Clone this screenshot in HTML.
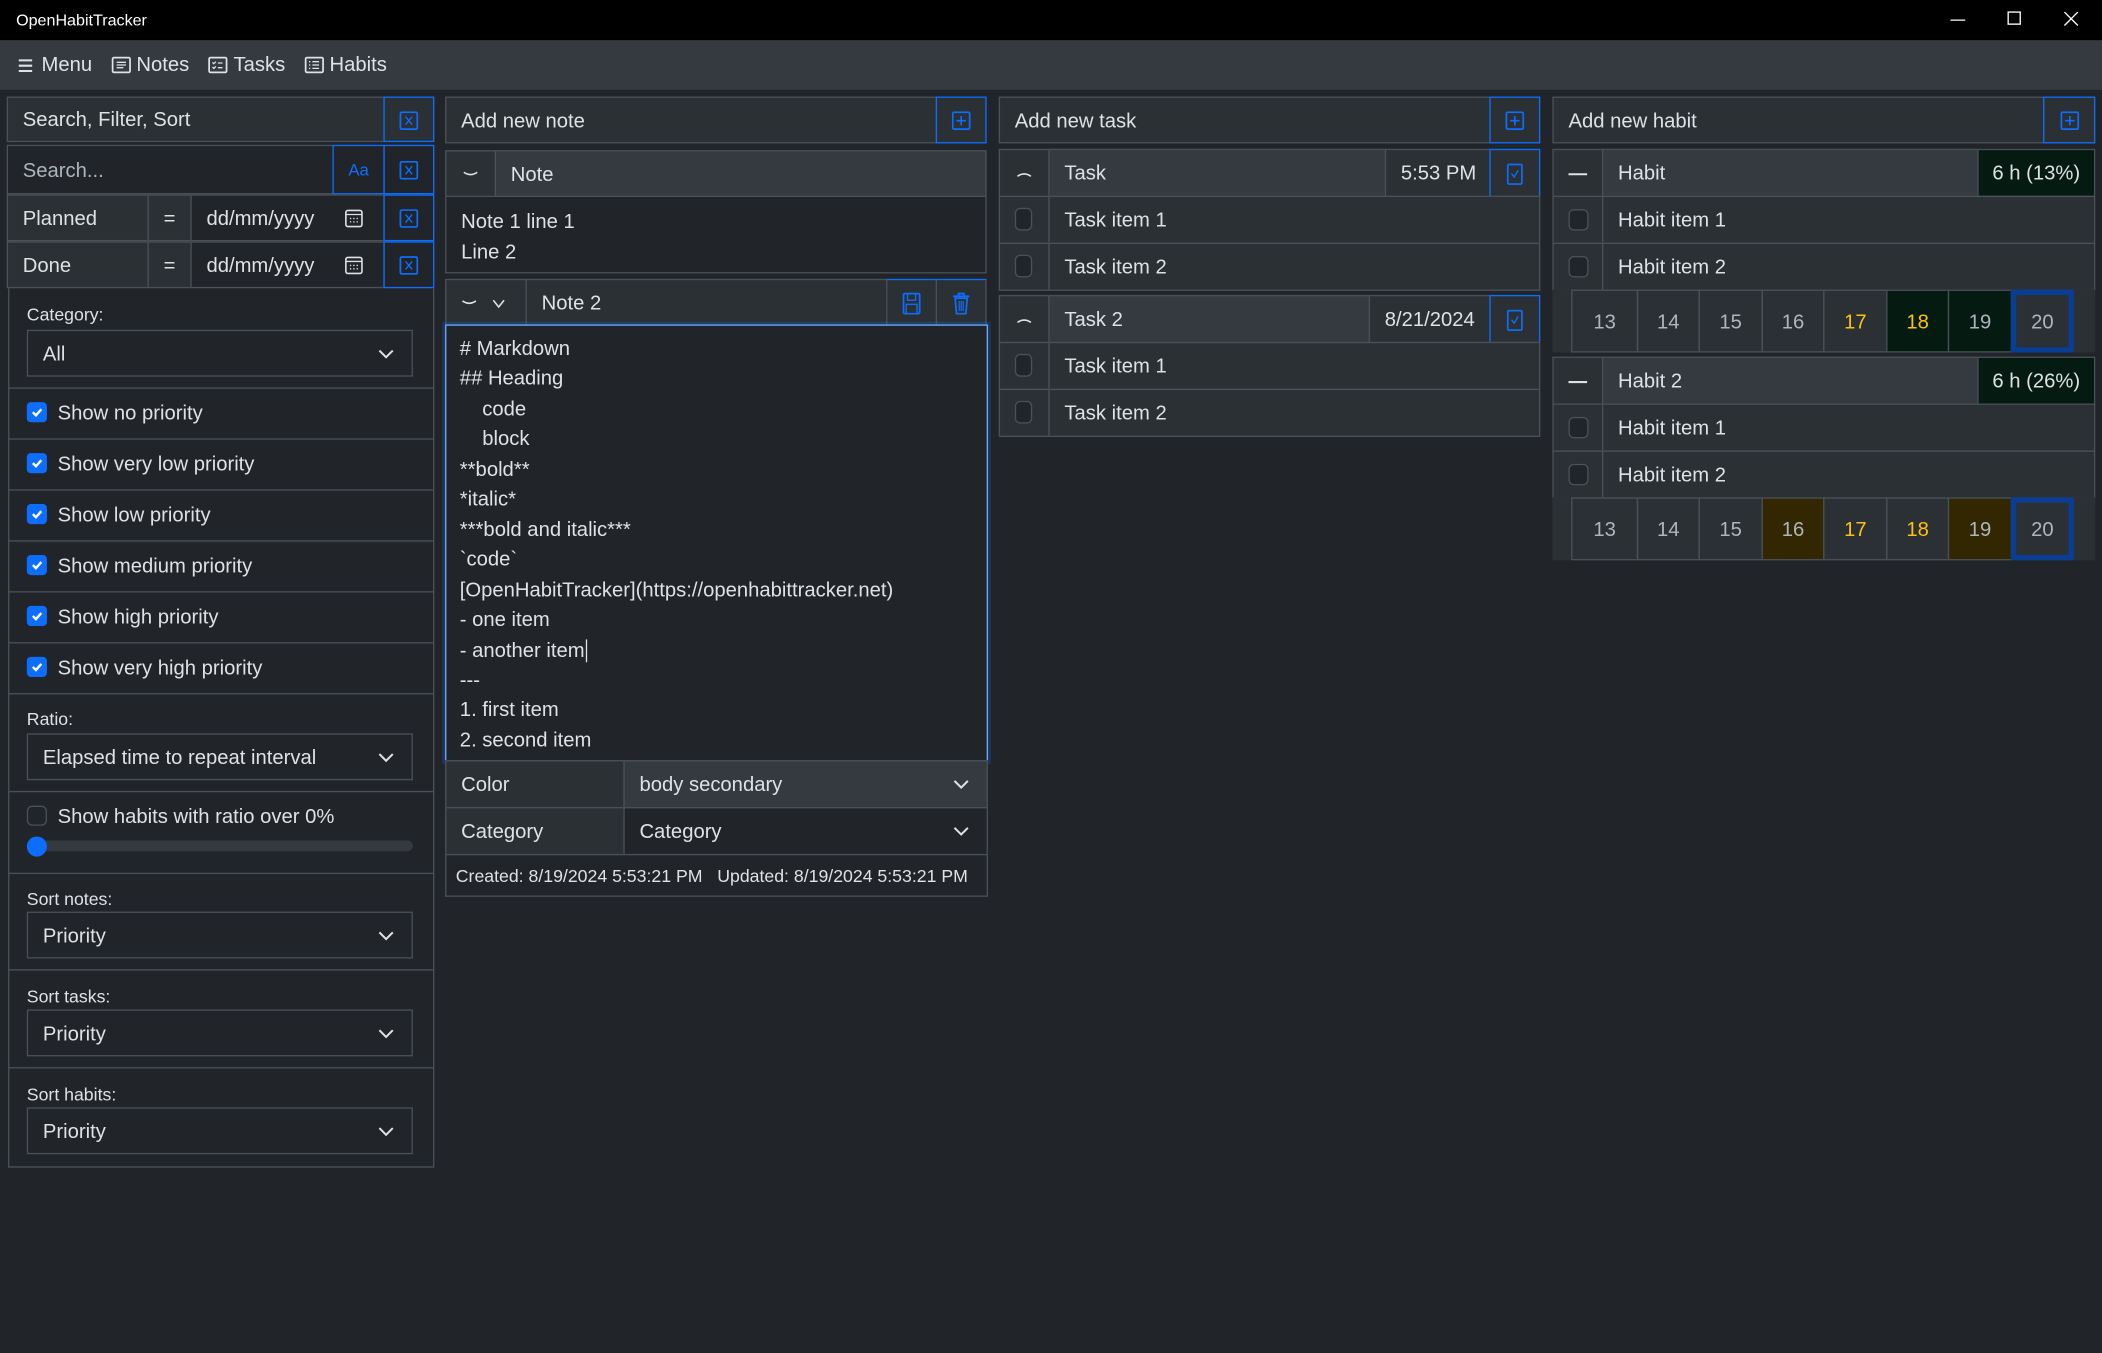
<!DOCTYPE html>
<html><head><meta charset="utf-8"><style>
html,body{margin:0;padding:0;background:#212529;width:2102px;height:1352px;overflow:hidden}
#w{position:absolute;left:0;top:0;width:1568px;height:1009px;transform:scale(1.34056);transform-origin:0 0;font-family:"Liberation Sans",sans-serif;color:#dee2e6;font-size:15.1px;background:#212529}
.a{position:absolute;box-sizing:border-box}
.c{position:absolute;box-sizing:border-box;border:1px solid #495057;display:flex;align-items:center;padding-left:11px;white-space:nowrap;padding-top:1px}
.p{background:#2b3035}.h{background:#343a40}.d{background:#212529}
.bl{border-color:#0d6efd}
.ic{justify-content:center;padding-left:0}
.lbl{position:absolute;font-size:13.2px}
.cb{position:absolute;width:15px;height:15px;border-radius:3px;background:#0d6efd}
.cb svg{position:absolute;left:2px;top:2px}
.ecb{position:absolute;width:15px;height:15px;border-radius:4px;border:1px solid #495057;background:#212529;box-sizing:border-box}
.sel svg{position:absolute;right:13px;top:50%;margin-top:-4px}
.day{position:absolute;box-sizing:border-box;border:1px solid #495057;display:flex;align-items:center;justify-content:center;color:#adb5bd;font-size:15.1px;padding-top:1px}
</style></head><body><div id="w">
<div class="a" style="left:0;top:0;width:1568px;height:30px;background:#000"></div>
<div class="a" style="left:12px;top:8px;font-size:12px;color:#fff">OpenHabitTracker</div>
<svg class="a" style="left:1455px;top:10px" width="12" height="10"><line x1="0" y1="5" x2="11" y2="5" stroke="#fff"/></svg>
<svg class="a" style="left:1497px;top:8px" width="12" height="12"><rect x="1" y="1" width="9" height="9" fill="none" stroke="#fff"/></svg>
<svg class="a" style="left:1539px;top:8px" width="12" height="12"><path d="M1 1L11 11M11 1L1 11" stroke="#fff"/></svg>
<div class="a" style="left:0;top:30px;width:1568px;height:37px;background:#343a40"></div>
<div class="a" style="left:13px;top:40px;display:flex;align-items:center;gap:0;font-size:15.1px;color:#dee2e6">
<svg width="12" height="12" style="margin-right:6px"><path d="M1 2H11M1 6H11M1 10H11" stroke="#dee2e6" stroke-width="1.5"/></svg>Menu
<svg width="15" height="13" style="margin:0 4px 0 14px"><rect x="1" y="1" width="13" height="11" rx="1" fill="none" stroke="#dee2e6" stroke-width="1.3"/><path d="M4 4.5H11M4 6.5H11M4 8.5H9" stroke="#dee2e6"/></svg>Notes
<svg width="15" height="13" style="margin:0 4px 0 14px"><rect x="1" y="1" width="13" height="11" rx="1" fill="none" stroke="#dee2e6" stroke-width="1.3"/><path d="M3.5 4.5l1 1 1.5-1.5M3.5 8l1 1 1.5-1.5M7.5 5H11M7.5 8.5H11" stroke="#dee2e6"/></svg>Tasks
<svg width="15" height="13" style="margin:0 4px 0 14px"><rect x="1" y="1" width="13" height="11" rx="1" fill="none" stroke="#dee2e6" stroke-width="1.3"/><path d="M3.5 4H4.5M3.5 6.5H4.5M3.5 9H4.5M6 4H11M6 6.5H11M6 9H11" stroke="#dee2e6"/></svg>Habits
</div>

<div class="c p" style="left:5px;top:72px;width:282px;height:34px">Search, Filter, Sort</div>
<div class="c p bl ic" style="left:286px;top:72px;width:38px;height:34px"><svg width="14" height="14"><rect x="0.7" y="0.7" width="12.6" height="12.6" rx="1" fill="none" stroke="#0d6efd" stroke-width="1.3"/><path d="M4.5 4L9.5 10M9.5 4L4.5 10" stroke="#0d6efd"/></svg></div>
<div class="c d" style="left:5px;top:108px;width:244px;height:37px;color:#adb5bd">Search...</div>
<div class="c d bl ic" style="left:248px;top:108px;width:39px;height:37px;color:#0d6efd;font-size:12.5px">Aa</div>
<div class="c d bl ic" style="left:286px;top:108px;width:38px;height:37px"><svg width="14" height="14"><rect x="0.7" y="0.7" width="12.6" height="12.6" rx="1" fill="none" stroke="#0d6efd" stroke-width="1.3"/><path d="M4.5 4L9.5 10M9.5 4L4.5 10" stroke="#0d6efd"/></svg></div>
<div class="c p" style="left:5px;top:145px;width:106px;height:35px">Planned</div>
<div class="c p ic" style="left:110px;top:145px;width:33px;height:35px">=</div>
<div class="c d" style="left:142px;top:145px;width:145px;height:35px">dd/mm/yyyy</div>
<svg class="a" style="left:257px;top:155px" width="14" height="15"><rect x="1" y="2" width="12" height="12" rx="1.5" fill="none" stroke="#dee2e6" stroke-width="1.2"/><path d="M1 5H13" stroke="#dee2e6"/><path d="M4 8h1M6.5 8h1M9 8h1M4 10.5h1M6.5 10.5h1M9 10.5h1" stroke="#dee2e6"/></svg>
<div class="c d bl ic" style="left:286px;top:145px;width:38px;height:35px"><svg width="14" height="14"><rect x="0.7" y="0.7" width="12.6" height="12.6" rx="1" fill="none" stroke="#0d6efd" stroke-width="1.3"/><path d="M4.5 4L9.5 10M9.5 4L4.5 10" stroke="#0d6efd"/></svg></div>
<div class="c p" style="left:5px;top:180px;width:106px;height:35px">Done</div>
<div class="c p ic" style="left:110px;top:180px;width:33px;height:35px">=</div>
<div class="c d" style="left:142px;top:180px;width:145px;height:35px">dd/mm/yyyy</div>
<svg class="a" style="left:257px;top:190px" width="14" height="15"><rect x="1" y="2" width="12" height="12" rx="1.5" fill="none" stroke="#dee2e6" stroke-width="1.2"/><path d="M1 5H13" stroke="#dee2e6"/><path d="M4 8h1M6.5 8h1M9 8h1M4 10.5h1M6.5 10.5h1M9 10.5h1" stroke="#dee2e6"/></svg>
<div class="c d bl ic" style="left:286px;top:180px;width:38px;height:35px"><svg width="14" height="14"><rect x="0.7" y="0.7" width="12.6" height="12.6" rx="1" fill="none" stroke="#0d6efd" stroke-width="1.3"/><path d="M4.5 4L9.5 10M9.5 4L4.5 10" stroke="#0d6efd"/></svg></div>
<div class="a" style="left:6px;top:215px;width:318px;height:656px;border:1px solid #495057;border-top:none"></div>
<div class="lbl" style="left:20px;top:227px">Category:</div>
<div class="c d sel" style="left:20px;top:246px;width:288px;height:35px">All<svg width="12" height="8"><path d="M1 1.5L6 6.5L11 1.5" fill="none" stroke="#dee2e6" stroke-width="1.5"/></svg></div>
<div class="a" style="left:6px;top:289px;width:318px;height:1px;background:#495057"></div>
<div class="lbl" style="left:20px;top:529px">Ratio:</div>
<div class="c d sel" style="left:20px;top:547px;width:288px;height:35px">Elapsed time to repeat interval<svg width="12" height="8"><path d="M1 1.5L6 6.5L11 1.5" fill="none" stroke="#dee2e6" stroke-width="1.5"/></svg></div>
<div class="a" style="left:6px;top:590px;width:318px;height:1px;background:#495057"></div>
<div class="ecb" style="left:20px;top:601px"></div>
<div class="a" style="left:43px;top:601px">Show habits with ratio over 0%</div>
<div class="a" style="left:20px;top:627px;width:288px;height:8px;border-radius:4px;background:#343a40"></div>
<div class="a" style="left:20px;top:624px;width:15px;height:15px;border-radius:50%;background:#0d6efd"></div>
<div class="a" style="left:6px;top:651px;width:318px;height:1px;background:#495057"></div>
<div class="lbl" style="left:20px;top:663px">Sort notes:</div>
<div class="c d sel" style="left:20px;top:680px;width:288px;height:35px">Priority<svg width="12" height="8"><path d="M1 1.5L6 6.5L11 1.5" fill="none" stroke="#dee2e6" stroke-width="1.5"/></svg></div>
<div class="a" style="left:6px;top:723px;width:318px;height:1px;background:#495057"></div>
<div class="lbl" style="left:20px;top:736px">Sort tasks:</div>
<div class="c d sel" style="left:20px;top:753px;width:288px;height:35px">Priority<svg width="12" height="8"><path d="M1 1.5L6 6.5L11 1.5" fill="none" stroke="#dee2e6" stroke-width="1.5"/></svg></div>
<div class="a" style="left:6px;top:796px;width:318px;height:1px;background:#495057"></div>
<div class="lbl" style="left:20px;top:809px">Sort habits:</div>
<div class="c d sel" style="left:20px;top:826px;width:288px;height:35px">Priority<svg width="12" height="8"><path d="M1 1.5L6 6.5L11 1.5" fill="none" stroke="#dee2e6" stroke-width="1.5"/></svg></div>

<div class="cb" style="left:20px;top:300px"><svg width="11" height="11"><path d="M2.5 5.5L4.8 7.8L8.8 3.3" fill="none" stroke="#fff" stroke-width="1.8"/></svg></div><div class="a" style="left:43px;top:300px">Show no priority</div>
<div class="a" style="left:6px;top:327px;width:318px;height:1px;background:#495057"></div>
<div class="cb" style="left:20px;top:338px"><svg width="11" height="11"><path d="M2.5 5.5L4.8 7.8L8.8 3.3" fill="none" stroke="#fff" stroke-width="1.8"/></svg></div><div class="a" style="left:43px;top:338px">Show very low priority</div>
<div class="a" style="left:6px;top:365px;width:318px;height:1px;background:#495057"></div>
<div class="cb" style="left:20px;top:376px"><svg width="11" height="11"><path d="M2.5 5.5L4.8 7.8L8.8 3.3" fill="none" stroke="#fff" stroke-width="1.8"/></svg></div><div class="a" style="left:43px;top:376px">Show low priority</div>
<div class="a" style="left:6px;top:403px;width:318px;height:1px;background:#495057"></div>
<div class="cb" style="left:20px;top:414px"><svg width="11" height="11"><path d="M2.5 5.5L4.8 7.8L8.8 3.3" fill="none" stroke="#fff" stroke-width="1.8"/></svg></div><div class="a" style="left:43px;top:414px">Show medium priority</div>
<div class="a" style="left:6px;top:441px;width:318px;height:1px;background:#495057"></div>
<div class="cb" style="left:20px;top:452px"><svg width="11" height="11"><path d="M2.5 5.5L4.8 7.8L8.8 3.3" fill="none" stroke="#fff" stroke-width="1.8"/></svg></div><div class="a" style="left:43px;top:452px">Show high priority</div>
<div class="a" style="left:6px;top:479px;width:318px;height:1px;background:#495057"></div>
<div class="cb" style="left:20px;top:490px"><svg width="11" height="11"><path d="M2.5 5.5L4.8 7.8L8.8 3.3" fill="none" stroke="#fff" stroke-width="1.8"/></svg></div><div class="a" style="left:43px;top:490px">Show very high priority</div>
<div class="a" style="left:6px;top:517px;width:318px;height:1px;background:#495057"></div>

<div class="c p" style="left:332px;top:72px;width:367px;height:35px">Add new note</div>
<div class="c p bl ic" style="left:698px;top:72px;width:38px;height:35px"><svg width="14" height="14"><rect x="0.7" y="0.7" width="12.6" height="12.6" rx="1" fill="none" stroke="#0d6efd" stroke-width="1.3"/><path d="M7 3.5V10.5M3.5 7H10.5" stroke="#0d6efd" stroke-width="1.2"/></svg></div>
<div class="c p ic" style="left:332px;top:112px;width:38px;height:35px"><svg width="12" height="6"><path d="M1 1.5Q6 5 11 1.5" fill="none" stroke="#dee2e6" stroke-width="1.2"/></svg></div>
<div class="c h" style="left:369px;top:112px;width:367px;height:35px">Note</div>
<div class="a d" style="left:332px;top:147px;width:404px;height:57px;border:1px solid #495057;border-top:none;padding:8px 0 0 11px;line-height:22.5px">Note 1 line 1<br>Line 2</div>
<div class="c p" style="left:332px;top:208px;width:61px;height:35px;gap:11px"><svg width="12" height="6"><path d="M1 1.5Q6 5 11 1.5" fill="none" stroke="#dee2e6" stroke-width="1.2"/></svg><svg width="10" height="7"><path d="M1 1L5 6L9 1" fill="none" stroke="#dee2e6" stroke-width="1.2"/></svg></div>
<div class="c p" style="left:392px;top:208px;width:270px;height:35px">Note 2</div>
<div class="c p ic" style="left:661px;top:208px;width:38px;height:35px;border-top-color:#0d6efd"><svg width="14" height="17"><rect x="1" y="1" width="12" height="15" rx="1" fill="none" stroke="#0d6efd" stroke-width="1.3"/><rect x="4" y="1" width="6" height="5" fill="none" stroke="#0d6efd"/><rect x="3" y="9" width="8" height="7" fill="none" stroke="#0d6efd"/></svg></div>
<div class="c p ic" style="left:698px;top:208px;width:38px;height:35px;border-top-color:#0d6efd"><svg width="14" height="17"><path d="M1 3H13M5 3V1H9V3" fill="none" stroke="#0d6efd" stroke-width="1.4"/><path d="M2.5 4.5L3.5 16H10.5L11.5 4.5Z" fill="none" stroke="#0d6efd" stroke-width="1.3"/><path d="M5.5 6.5V14M7 6.5V14M8.5 6.5V14" stroke="#0d6efd" stroke-width="0.9"/></svg></div>
<div class="a d" style="left:332px;top:242px;width:405px;height:326px;border:1px solid #6ea8fe;box-shadow:0 0 0 2px rgba(13,110,253,0.25);padding:7px 0 0 10px;line-height:22.45px;white-space:pre"># Markdown
## Heading
    code
    block
**bold**
*italic*
***bold and italic***
`code`
[OpenHabitTracker](https://openhabittracker.net)
- one item
- another item<span style="border-left:1px solid #dee2e6;margin-left:1px"></span>
---
1. first item
2. second item</div>
<div class="c p" style="left:332px;top:567px;width:134px;height:36px">Color</div>
<div class="c h sel" style="left:465px;top:567px;width:272px;height:36px">body secondary<svg width="12" height="8"><path d="M1 1.5L6 6.5L11 1.5" fill="none" stroke="#dee2e6" stroke-width="1.5"/></svg></div>
<div class="c p" style="left:332px;top:602px;width:134px;height:36px">Category</div>
<div class="c d sel" style="left:465px;top:602px;width:272px;height:36px">Category<svg width="12" height="8"><path d="M1 1.5L6 6.5L11 1.5" fill="none" stroke="#dee2e6" stroke-width="1.5"/></svg></div>
<div class="c d" style="left:332px;top:637px;width:405px;height:32px;font-size:13.2px;padding-left:7px">Created: 8/19/2024 5:53:21 PM&nbsp;&nbsp;&nbsp;Updated: 8/19/2024 5:53:21 PM</div>

<div class="c p" style="left:745px;top:72px;width:367px;height:35px">Add new task</div>
<div class="c p bl ic" style="left:1111px;top:72px;width:38px;height:35px"><svg width="14" height="14"><rect x="0.7" y="0.7" width="12.6" height="12.6" rx="1" fill="none" stroke="#0d6efd" stroke-width="1.3"/><path d="M7 3.5V10.5M3.5 7H10.5" stroke="#0d6efd" stroke-width="1.2"/></svg></div>
<div class="c p ic" style="left:745px;top:111px;width:38px;height:36px"><svg width="12" height="6"><path d="M1 4.5Q6 1 11 4.5" fill="none" stroke="#dee2e6" stroke-width="1.2"/></svg></div>
<div class="c h" style="left:782px;top:111px;width:252px;height:36px">Task</div>
<div class="c p" style="left:1033px;top:111px;width:79px;height:36px">5:53 PM</div>
<div class="c p bl ic" style="left:1111px;top:111px;width:38px;height:36px"><svg width="12" height="16"><rect x="0.7" y="0.7" width="10.6" height="14.6" rx="1" fill="none" stroke="#0d6efd" stroke-width="1.3"/><path d="M3.5 7.5L5.5 10L8.5 5" fill="none" stroke="#0d6efd"/></svg></div>
<div class="c p" style="left:745px;top:146px;width:38px;height:36px"></div><div class="ecb" style="left:757px;top:155px;width:13px;height:17px"></div>
<div class="c p" style="left:782px;top:146px;width:367px;height:36px">Task item 1</div>
<div class="c p" style="left:745px;top:181px;width:38px;height:36px"></div><div class="ecb" style="left:757px;top:190px;width:13px;height:17px"></div>
<div class="c p" style="left:782px;top:181px;width:367px;height:36px">Task item 2</div>
<div class="c p ic" style="left:745px;top:220px;width:38px;height:36px"><svg width="12" height="6"><path d="M1 4.5Q6 1 11 4.5" fill="none" stroke="#dee2e6" stroke-width="1.2"/></svg></div>
<div class="c h" style="left:782px;top:220px;width:240px;height:36px">Task 2</div>
<div class="c p" style="left:1021px;top:220px;width:91px;height:36px">8/21/2024</div>
<div class="c p bl ic" style="left:1111px;top:220px;width:38px;height:36px"><svg width="12" height="16"><rect x="0.7" y="0.7" width="10.6" height="14.6" rx="1" fill="none" stroke="#0d6efd" stroke-width="1.3"/><path d="M3.5 7.5L5.5 10L8.5 5" fill="none" stroke="#0d6efd"/></svg></div>
<div class="c p" style="left:745px;top:255px;width:38px;height:36px"></div><div class="ecb" style="left:757px;top:264px;width:13px;height:17px"></div>
<div class="c p" style="left:782px;top:255px;width:367px;height:36px">Task item 1</div>
<div class="c p" style="left:745px;top:290px;width:38px;height:36px"></div><div class="ecb" style="left:757px;top:299px;width:13px;height:17px"></div>
<div class="c p" style="left:782px;top:290px;width:367px;height:36px">Task item 2</div>

<div class="c p" style="left:1158px;top:72px;width:367px;height:35px;padding-left:11px">Add new habit</div>
<div class="c p bl ic" style="left:1524px;top:72px;width:39px;height:35px"><svg width="14" height="14"><rect x="0.7" y="0.7" width="12.6" height="12.6" rx="1" fill="none" stroke="#0d6efd" stroke-width="1.3"/><path d="M7 3.5V10.5M3.5 7H10.5" stroke="#0d6efd" stroke-width="1.2"/></svg></div>
<div class="c p ic" style="left:1158px;top:111px;width:38px;height:36px"><svg width="14" height="4"><path d="M0 2H14" stroke="#dee2e6" stroke-width="1.5"/></svg></div>
<div class="c h" style="left:1195px;top:111px;width:281px;height:36px">Habit</div>
<div class="c ic" style="left:1475px;top:111px;width:88px;height:36px;background:#051b11">6 h (13%)</div>
<div class="c p" style="left:1158px;top:146px;width:38px;height:36px"></div><div class="ecb" style="left:1170px;top:156px;width:15px;height:16px"></div>
<div class="c p" style="left:1195px;top:146px;width:368px;height:36px">Habit item 1</div>
<div class="c p" style="left:1158px;top:181px;width:38px;height:36px"></div><div class="ecb" style="left:1170px;top:191px;width:15px;height:16px"></div>
<div class="c p" style="left:1195px;top:181px;width:368px;height:36px">Habit item 2</div>
<div class="a p" style="left:1158px;top:216px;width:405px;height:47px"></div>
<div class="day" style="left:1172px;top:216px;width:50px;height:47px">13</div>
<div class="day" style="left:1221px;top:216px;width:47px;height:47px">14</div>
<div class="day" style="left:1267px;top:216px;width:48px;height:47px">15</div>
<div class="day" style="left:1314px;top:216px;width:47px;height:47px">16</div>
<div class="day" style="left:1360px;top:216px;width:48px;height:47px;color:#ffc107">17</div>
<div class="day" style="left:1407px;top:216px;width:47px;height:47px;color:#ffc107;background:#051b11">18</div>
<div class="day" style="left:1453px;top:216px;width:48px;height:47px;background:#051b11">19</div>
<div class="day" style="left:1500px;top:216px;width:47px;height:47px;border:4px solid #0a3d94">20</div>
<div class="c p ic" style="left:1158px;top:266px;width:38px;height:36px"><svg width="14" height="4"><path d="M0 2H14" stroke="#dee2e6" stroke-width="1.5"/></svg></div>
<div class="c h" style="left:1195px;top:266px;width:281px;height:36px">Habit 2</div>
<div class="c ic" style="left:1475px;top:266px;width:88px;height:36px;background:#051b11">6 h (26%)</div>
<div class="c p" style="left:1158px;top:301px;width:38px;height:36px"></div><div class="ecb" style="left:1170px;top:311px;width:15px;height:16px"></div>
<div class="c p" style="left:1195px;top:301px;width:368px;height:36px">Habit item 1</div>
<div class="c p" style="left:1158px;top:336px;width:38px;height:36px"></div><div class="ecb" style="left:1170px;top:346px;width:15px;height:16px"></div>
<div class="c p" style="left:1195px;top:336px;width:368px;height:36px">Habit item 2</div>
<div class="a p" style="left:1158px;top:371px;width:405px;height:47px"></div>
<div class="day" style="left:1172px;top:371px;width:50px;height:47px">13</div>
<div class="day" style="left:1221px;top:371px;width:47px;height:47px">14</div>
<div class="day" style="left:1267px;top:371px;width:48px;height:47px">15</div>
<div class="day" style="left:1314px;top:371px;width:47px;height:47px;background:#332701">16</div>
<div class="day" style="left:1360px;top:371px;width:48px;height:47px;color:#ffc107">17</div>
<div class="day" style="left:1407px;top:371px;width:47px;height:47px;color:#ffc107">18</div>
<div class="day" style="left:1453px;top:371px;width:48px;height:47px;background:#332701">19</div>
<div class="day" style="left:1500px;top:371px;width:47px;height:47px;border:4px solid #0a3d94">20</div>
</div></body></html>
